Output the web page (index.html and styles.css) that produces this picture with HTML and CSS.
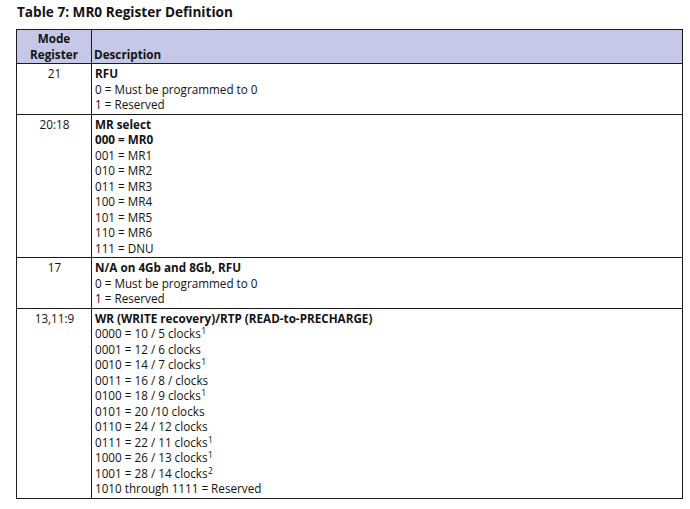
FILE: index.html
```html
<!DOCTYPE html>
<html lang="en">
<head>
<meta charset="utf-8">
<title>Table 7: MR0 Register Definition</title>
<link rel="stylesheet" href="styles.css">
</head>
<body>
<div class="page">
  <div class="title">Table 7: MR0 Register Definition</div>
  <table class="reg">
    <colgroup><col class="c1"><col class="c2"></colgroup>
    <thead>
      <tr>
        <th class="mode">Mode<br>Register</th>
        <th class="desc">Description</th>
      </tr>
    </thead>
    <tbody>
      <tr>
        <td class="bit">21</td>
        <td class="def">
          <div class="b">RFU</div>
          <div>0 = Must be programmed to 0</div>
          <div>1 = Reserved</div>
        </td>
      </tr>
      <tr>
        <td class="bit">20:18</td>
        <td class="def">
          <div class="b">MR select</div>
          <div class="b">000 = MR0</div>
          <div>001 = MR1</div>
          <div>010 = MR2</div>
          <div>011 = MR3</div>
          <div>100 = MR4</div>
          <div>101 = MR5</div>
          <div>110 = MR6</div>
          <div>111 = DNU</div>
        </td>
      </tr>
      <tr>
        <td class="bit">17</td>
        <td class="def">
          <div class="b">N/A on 4Gb and 8Gb, RFU</div>
          <div>0 = Must be programmed to 0</div>
          <div>1 = Reserved</div>
        </td>
      </tr>
      <tr>
        <td class="bit">13,11:9</td>
        <td class="def">
          <div class="b">WR (WRITE recovery)/RTP (READ-to-PRECHARGE)</div>
          <div>0000 = 10 / 5 clocks<sup>1</sup></div>
          <div>0001 = 12 / 6 clocks</div>
          <div>0010 = 14 / 7 clocks<sup>1</sup></div>
          <div>0011 = 16 / 8 / clocks</div>
          <div>0100 = 18 / 9 clocks<sup>1</sup></div>
          <div>0101 = 20 /10 clocks</div>
          <div>0110 = 24 / 12 clocks</div>
          <div>0111 = 22 / 11 clocks<sup>1</sup></div>
          <div>1000 = 26 / 13 clocks<sup>1</sup></div>
          <div>1001 = 28 / 14 clocks<sup>2</sup></div>
          <div>1010 through 1111 = Reserved</div>
        </td>
      </tr>
    </tbody>
  </table>
</div>
</body>
</html>
```
FILE: styles.css
```css
html, body {
  margin: 0;
  padding: 0;
  background: #ffffff;
}
body {
  font-family: "Open Sans", "Liberation Sans", sans-serif;
  color: #141213;
}
.page {
  padding: 4px 0 0 16px;
}
.title {
  font-weight: 700;
  font-size: 13.6px;
  line-height: 16px;
  height: 25px;
  padding-left: 1px;
}
.reg {
  border-collapse: collapse;
  width: 667px;
  font-size: 11.7px;
  line-height: 15.5px;
}
.c1 { width: 75px; }
.reg th, .reg td {
  border: 1px solid #1d1a1b;
  padding: 2px 2px 1px 3px;
  vertical-align: top;
}
.reg thead th {
  background: #c5c8e6;
  font-weight: 700;
  line-height: 16px;
  padding: 0 2px 1px 2px;
}
.reg th.mode {
  text-align: center;
}
.reg th.desc {
  text-align: left;
  vertical-align: bottom;
}
.reg td.bit {
  text-align: center;
}
.reg td.def {
  text-align: left;
}
.b {
  font-weight: 700;
}
sup {
  font-size: 8.5px;
  line-height: 0;
  vertical-align: 4px;
  margin-left: 0.5px;
}
```
